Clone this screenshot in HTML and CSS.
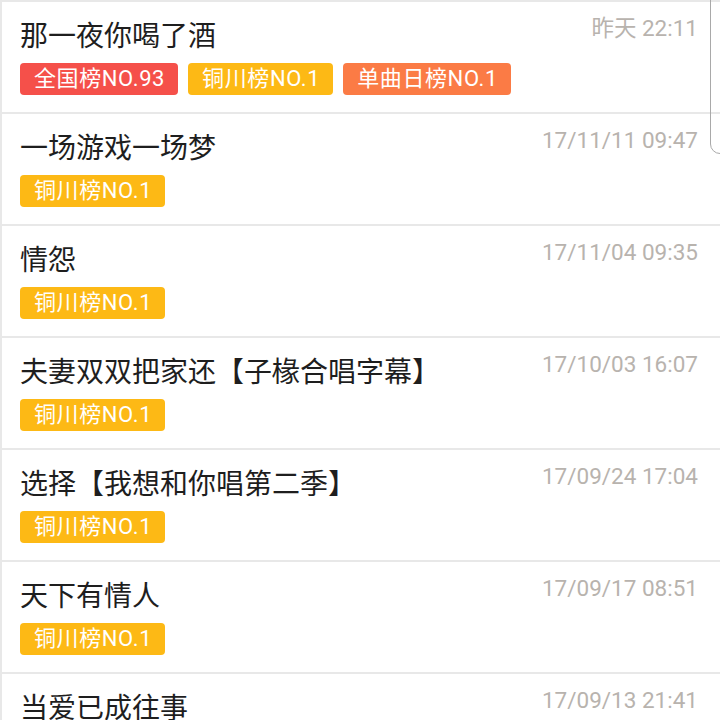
FILE: index.html
```html
<!DOCTYPE html>
<html lang="zh-CN">
<head>
<meta charset="utf-8">
<link rel="stylesheet" href="styles.css">
</head>
<body>
<div class="list">
  <div class="row">
    <div class="main">
      <div class="title">那一夜你喝了酒</div>
      <div class="tags">
        <span class="tag red">全国榜NO.93</span>
        <span class="tag yellow">铜川榜NO.1</span>
        <span class="tag orange">单曲日榜NO.1</span>
      </div>
    </div>
    <div class="date">昨天 22:11</div>
  </div>
  <div class="row">
    <div class="main">
      <div class="title">一场游戏一场梦</div>
      <div class="tags"><span class="tag yellow">铜川榜NO.1</span></div>
    </div>
    <div class="date">17/11/11 09:47</div>
  </div>
  <div class="row">
    <div class="main">
      <div class="title">情怨</div>
      <div class="tags"><span class="tag yellow">铜川榜NO.1</span></div>
    </div>
    <div class="date">17/11/04 09:35</div>
  </div>
  <div class="row">
    <div class="main">
      <div class="title">夫妻双双把家还【子椽合唱字幕】</div>
      <div class="tags"><span class="tag yellow">铜川榜NO.1</span></div>
    </div>
    <div class="date">17/10/03 16:07</div>
  </div>
  <div class="row">
    <div class="main">
      <div class="title">选择【我想和你唱第二季】</div>
      <div class="tags"><span class="tag yellow">铜川榜NO.1</span></div>
    </div>
    <div class="date">17/09/24 17:04</div>
  </div>
  <div class="row">
    <div class="main">
      <div class="title">天下有情人</div>
      <div class="tags"><span class="tag yellow">铜川榜NO.1</span></div>
    </div>
    <div class="date">17/09/17 08:51</div>
  </div>
  <div class="row">
    <div class="main">
      <div class="title">当爱已成往事</div>
      <div class="tags"><span class="tag yellow">铜川榜NO.1</span></div>
    </div>
    <div class="date">17/09/13 21:41</div>
  </div>
</div>
<div class="edge"></div>
</body>
</html>
```
FILE: styles.css
```css
html, body {
  margin: 0;
  padding: 0;
  background: #ffffff;
  overflow: hidden;
}
body {
  font-family: "Roboto", "Noto Sans CJK SC", sans-serif;
  width: 720px;
  height: 720px;
  position: relative;
}
.list {
  border-left: 2px solid #e8e8e8;
}
.row {
  display: flex;
  justify-content: space-between;
  align-items: flex-start;
  border-top: 2px solid #e8e8e8;
  height: 110px;
  box-sizing: content-box;
  padding: 0 22px 0 18px;
}
.main {
  display: flex;
  flex-direction: column;
}
.title {
  font-size: 28px;
  line-height: 36px;
  color: #1e1e1e;
  margin-top: 14px;
  font-family: "Noto Sans CJK SC", sans-serif;
}
.tags {
  display: flex;
  gap: 10px;
  margin-top: 11px;
}
.tag {
  display: inline-block;
  height: 32px;
  line-height: 32px;
  padding: 0 13px 0 14px;
  border-radius: 4px;
  color: #ffffff;
  font-size: 22px;
  letter-spacing: 0.6px;
  font-family: "Roboto", "Noto Sans CJK SC", sans-serif;
}
.red { background: #f5504a; }
.yellow { background: #fdb915; }
.orange { background: #fb7b45; }
.date {
  font-size: 22.5px;
  line-height: 28px;
  margin-top: 12px;
  color: #b8b3ae;
  font-family: "Roboto", "Noto Sans CJK SC", sans-serif;
}
.edge {
  position: absolute;
  left: 710px;
  top: -20px;
  width: 40px;
  height: 174px;
  border: 1px solid #a9a9a9;
  border-bottom-left-radius: 10px;
  box-sizing: border-box;
  background: transparent;
}
```
